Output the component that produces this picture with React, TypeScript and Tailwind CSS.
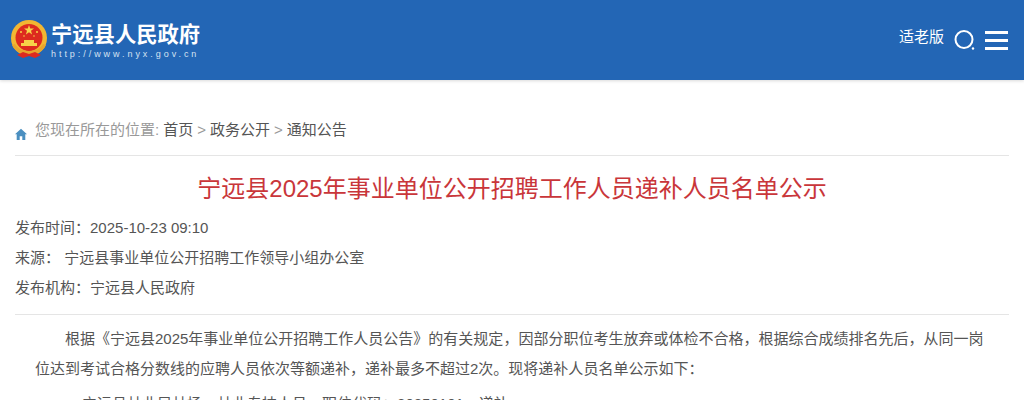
const cjk = '[font-family:"Liberation_Sans","Noto_Sans_CJK_SC",sans-serif]';
// full-width punctuation, kept as escapes so it can't get normalised
const colon = '\uFF1A';
const comma = '\uFF0C';

function Emblem() {
  return (
    <svg width="38" height="40" viewBox="0 0 38 40" className="shrink-0">
      <circle cx="19" cy="18" r="18" fill="#f2b632" />
      <circle cx="19" cy="17.5" r="13.5" fill="#dd2a1f" />
      <polygon points="19,5 20.2,8.6 24,8.6 21,10.8 22.1,14.4 19,12.2 15.9,14.4 17,10.8 14,8.6 17.8,8.6" fill="#f7d348" />
      <circle cx="11" cy="12" r="1" fill="#f7d348" />
      <circle cx="14" cy="16" r="0.8" fill="#f7d348" />
      <circle cx="27" cy="12" r="1" fill="#f7d348" />
      <circle cx="24" cy="16" r="0.8" fill="#f7d348" />
      <rect x="11" y="23" width="16" height="3" fill="#f7d348" />
      <rect x="14" y="20" width="10" height="3" fill="#f7d348" />
      <path d="M2 25c3 7 9 9 17 9s14-2 17-9l-3-1c-3 5-8 7-14 7S8 29 5 24z" fill="#e8a52c" />
      <path d="M7 35l6-3 6 2 6-2 6 3-6 3-6-2-6 2z" fill="#dd2a1f" />
    </svg>
  );
}

function SearchIcon() {
  return (
    <svg width="22" height="22" viewBox="0 0 22 22" fill="none" className="shrink-0">
      <circle cx="10" cy="10.5" r="8.5" stroke="#fff" strokeWidth="2" />
      <circle cx="19" cy="19.5" r="1.2" fill="#fff" />
    </svg>
  );
}

function Crumbs() {
  return (
    <div className="flex items-center h-[30px] text-[15px] text-[#999]">
      <svg width="12" height="12" viewBox="0 0 12 12" className="mr-[8px] mt-[7px] shrink-0">
        <path d="M6 .8 0 6.2h1.7V12h3V8.2h2.6V12h3V6.2H12z" fill="#4b8fc0" />
      </svg>
      <span>您现在所在的位置:</span>
      <span className="ml-[4px] text-[#555]">首页</span>
      <span className="mx-[4px]">&gt;</span>
      <span className="text-[#555]">政务公开</span>
      <span className="mx-[4px]">&gt;</span>
      <span className="text-[#555]">通知公告</span>
    </div>
  );
}

export default function App() {
  return (
    <div className={`w-[1024px] h-[400px] overflow-hidden bg-white ${cjk}`}>
      <header className="h-[80px] bg-[#2366b5] flex items-center justify-between pl-[10px] pr-[16px] shadow-[0_1px_3px_rgba(0,0,0,0.15)]">
        <div className="flex items-center gap-[3px]">
          <Emblem />
          <div className="flex flex-col text-white pt-[2px]">
            <span className="text-[21.3px] leading-[26px] font-bold">宁远县人民政府</span>
            <span className="text-[9px] leading-[12px] tracking-[2.95px] text-[#d5e2f2]">http://www.nyx.gov.cn</span>
          </div>
        </div>
        <div className="flex items-center text-white">
          <span className="text-[15px] mr-[10px] -mt-[6px]">适老版</span>
          <SearchIcon />
          <div className="ml-[9px] flex flex-col gap-[5px] w-[23px]">
            <div className="h-[3px] bg-white" />
            <div className="h-[3px] bg-white" />
            <div className="h-[3px] bg-white" />
          </div>
        </div>
      </header>

      <main className="px-[15px] pt-[35px]">
        <div className="border-b border-[#e5e5e5] h-[41px]">
          <Crumbs />
        </div>
        <h1 className="mt-[16px] text-center text-[24px] leading-[34px] font-normal text-[#c9363a]">
          宁远县2025年事业单位公开招聘工作人员递补人员名单公示
        </h1>
        <div className="mt-[7px] pb-[11px] border-b border-[#e5e5e5] text-[15px] leading-[30px] text-[#555]">
          <p>发布时间{colon}2025-10-23 09:10</p>
          <p>来源{colon}&nbsp;宁远县事业单位公开招聘工作领导小组办公室</p>
          <p>发布机构{colon}宁远县人民政府</p>
        </div>
        <div className="px-[20px] pt-[9px] text-[15px] leading-[30px] text-[#555]">
          <p className="indent-[30px]">
            根据《宁远县2025年事业单位公开招聘工作人员公告》的有关规定{comma}因部分职位考生放弃或体检不合格{comma}根据综合成绩排名先后{comma}从同一岗位达到考试合格分数线的应聘人员依次等额递补{comma}递补最多不超过2次。现将递补人员名单公示如下{colon}
          </p>
          <p className="mt-[5px] indent-[47px]">
            宁远县林业局林场{comma}林业专技人员{comma}职位代码{colon}20250101{comma}递补
          </p>
        </div>
      </main>
    </div>
  );
}
